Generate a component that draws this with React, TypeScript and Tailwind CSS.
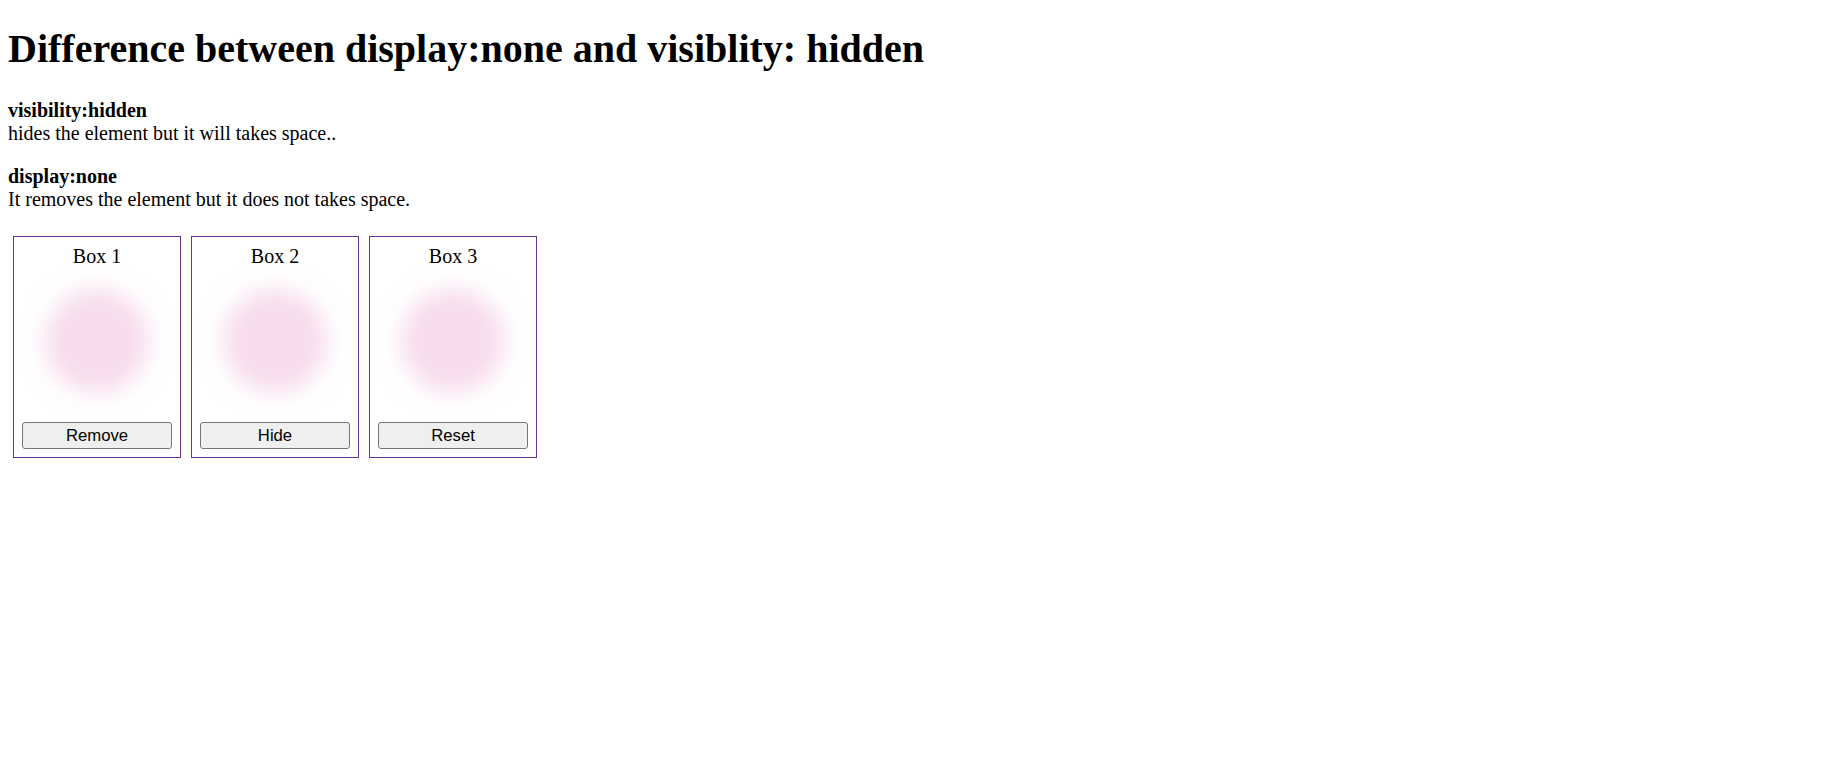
const boxes = [
  { title: "Box 1", action: "Remove" },
  { title: "Box 2", action: "Hide" },
  { title: "Box 3", action: "Reset" },
];

function Box({ title, action }: { title: string; action: string }) {
  return (
    <div className="flex w-[168px] flex-col border border-[#663399] p-[8px]">
      <p className="text-center text-[20px] leading-[23px]">{title}</p>
      <div className="mx-auto mt-[21px] h-[104px] w-[104px] rounded-full bg-[#f7dced] blur-[11px]" />
      <button
        type="button"
        className="mt-[29px] h-[27px] w-full rounded-[3px] border border-[#767676] bg-[#efefef] text-[16.7px] text-black"
        style={{ fontFamily: '"Liberation Sans", Arial, sans-serif' }}
      >
        {action}
      </button>
    </div>
  );
}

export default function App() {
  return (
    <div className="min-h-screen bg-white px-[8px] pb-[10px] text-black" style={{ fontFamily: '"Liberation Serif", "Times New Roman", serif' }}>
      <h1 className="pt-[26px] text-[40px] font-bold leading-[46px]">Difference between display:none and visiblity: hidden</h1>

      <p className="mt-[27px] text-[20px] leading-[23px]">
        <b>visibility:hidden</b>
        <br />
        hides the element but it will takes space..
      </p>
      <p className="mt-[20px] text-[20px] leading-[23px]">
        <b>display:none</b>
        <br />
        It removes the element but it does not takes space.
      </p>

      <div className="ml-[5px] mt-[25px] flex gap-[10px]">
        {boxes.map((box) => (
          <Box key={box.title} title={box.title} action={box.action} />
        ))}
      </div>
    </div>
  );
}
